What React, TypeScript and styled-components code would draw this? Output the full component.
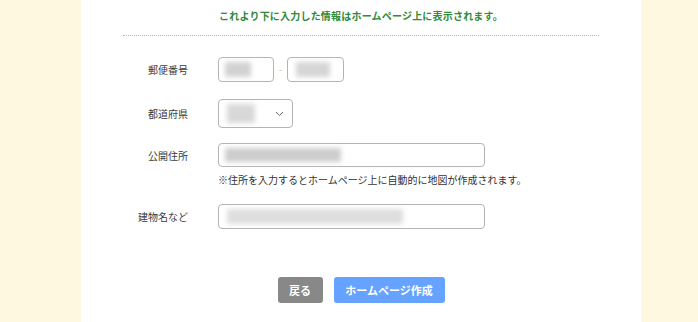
import styled, { createGlobalStyle } from 'styled-components';

const GlobalStyle = createGlobalStyle`
    html, body {
        margin: 0;
        padding: 0;
        background: #fff8e0;
        font-family: "Noto Sans CJK JP", "Noto Sans", sans-serif;
    }
`

const Page = styled.div`
    display: flex;
    justify-content: flex-start;
    min-height: 322px;
    padding-left: 81px;
`

const Panel = styled.div`
    width: 560px;
    min-height: 322px;
    background: #fff;
    display: flex;
    flex-direction: column;
    align-items: center;
`

const Lead = styled.p`
    margin: 8px 0 0;
    font-size: 10px;
    line-height: 16px;
    font-weight: 700;
    color: #2f8a3a;
    letter-spacing: 0.2px;
`

const Divider = styled.div`
    width: 476px;
    margin-top: 11px;
    border-top: 1px dotted #8fd09a;
`

const Form = styled.div`
    width: 476px;
    display: flex;
    flex-direction: column;
`

const Row = styled.div<{ $top: number }>`
    display: grid;
    grid-template-columns: 65px 1fr;
    column-gap: 30px;
    align-items: start;
    margin-top: ${p => p.$top}px;
`

const Label = styled.div<{ $h: number }>`
    height: ${p => p.$h}px;
    display: flex;
    align-items: center;
    justify-content: flex-end;
    font-size: 10px;
    color: #3a3a3a;
`

const Field = styled.div`
    display: flex;
    flex-direction: column;
    gap: 5px;
`

const Inline = styled.div`
    display: flex;
    align-items: center;
    gap: 5px;
`

const Box = styled.div<{ $w: number; $h: number }>`
    position: relative;
    width: ${p => p.$w}px;
    height: ${p => p.$h}px;
    box-sizing: border-box;
    border: 1px solid #b4b4b4;
    border-radius: 4px;
    background: #fff;
    display: flex;
    align-items: center;
    justify-content: flex-end;
    padding-right: 8px;
`

const Smudge = styled.span<{ $l: number; $w: number; $tone: string }>`
    position: absolute;
    left: ${p => p.$l}px;
    top: 4px;
    bottom: 4px;
    width: ${p => p.$w}px;
    background: ${p => p.$tone};
    filter: blur(2.5px);
`

const Dash = styled.span`
    font-size: 9px;
    color: #d8b070;
`

const Note = styled.div`
    font-size: 10px;
    color: #333;
`

const Actions = styled.div`
    display: flex;
    gap: 11px;
    margin-top: 48px;
`

const Btn = styled.button<{ $primary?: boolean }>`
    width: ${p => (p.$primary ? 111 : 45)}px;
    height: 26px;
    padding: 0;
    border: none;
    border-radius: 3px;
    background: ${p => (p.$primary ? '#66a2ff' : '#888888')};
    color: #fff;
    font-family: inherit;
    font-size: 11px;
    font-weight: 700;
`

const Chevron = () => (
    <svg width="9" height="6" viewBox="0 0 9 6">
        <path d="M1 1 L4.5 4.5 L8 1" fill="none" stroke="#666" strokeWidth="1" />
    </svg>
)

const App = () => {
    return (
        <Page>
            <GlobalStyle />
            <Panel>
                <Lead>これより下に入力した情報はホームページ上に表示されます。</Lead>
                <Divider />
                <Form>
                    <Row $top={21}>
                        <Label $h={25}>郵便番号</Label>
                        <Inline>
                            <Box $w={56} $h={25}>
                                <Smudge $l={6} $w={26} $tone="#d2d2d2" />
                            </Box>
                            <Dash>-</Dash>
                            <Box $w={57} $h={25}>
                                <Smudge $l={8} $w={34} $tone="#d6d6d6" />
                            </Box>
                        </Inline>
                    </Row>
                    <Row $top={17}>
                        <Label $h={29}>都道府県</Label>
                        <Box $w={75} $h={29}>
                            <Smudge $l={8} $w={28} $tone="#d8d8d8" />
                            <Chevron />
                        </Box>
                    </Row>
                    <Row $top={15}>
                        <Label $h={24}>公開住所</Label>
                        <Field>
                            <Box $w={267} $h={24}>
                                <Smudge $l={6} $w={116} $tone="#cdcdcd" />
                            </Box>
                            <Note>※住所を入力するとホームページ上に自動的に地図が作成されます。</Note>
                        </Field>
                    </Row>
                    <Row $top={17}>
                        <Label $h={25}>建物名など</Label>
                        <Box $w={267} $h={25}>
                            <Smudge $l={8} $w={176} $tone="#dedede" />
                        </Box>
                    </Row>
                </Form>
                <Actions>
                    <Btn>戻る</Btn>
                    <Btn $primary>ホームページ作成</Btn>
                </Actions>
            </Panel>
        </Page>
    );
}

export default App;
